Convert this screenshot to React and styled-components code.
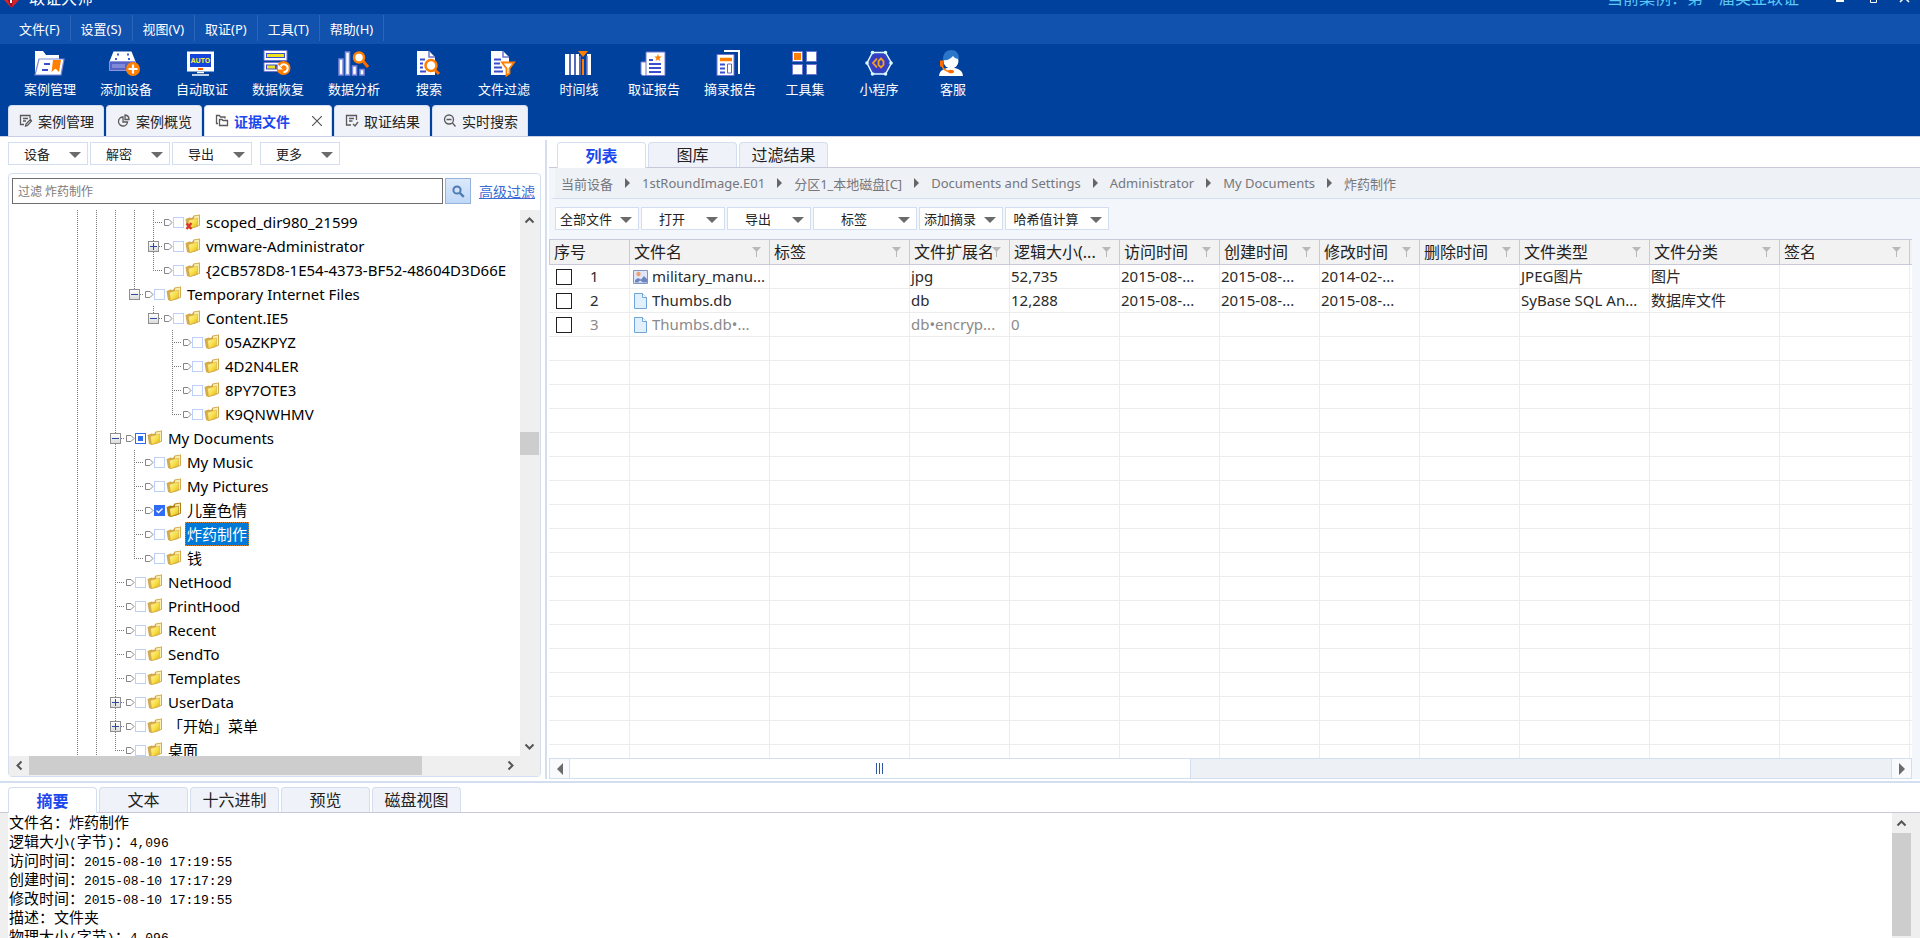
// src/App.jsx
import React, { useState } from 'react';
import styled, { createGlobalStyle, css } from 'styled-components';

const MENUS = ['文件(F)', '设置(S)', '视图(V)', '取证(P)', '工具(T)', '帮助(H)'];

const LEFT_ACTIONS = ['设备', '解密', '导出'];

const LIST_ACTIONS = [
  { label: '全部文件' },
  { label: '打开' },
  { label: '导出' },
  { label: '标签', wide: true },
  { label: '添加摘录' },
  { label: '哈希值计算', wide: true },
];

const CRUMBS = [
  '当前设备',
  '1stRoundImage.E01',
  '分区1_本地磁盘[C]',
  'Documents and Settings',
  'Administrator',
  'My Documents',
  '炸药制作',
];

// guides: ancestor levels that still have a line running down
const TREE = [
  { name: 'scoped_dir980_21599', level: 4, guides: [0, 1, 2, 3], deleted: true },
  { name: 'vmware-Administrator', level: 4, guides: [0, 1, 2, 3], box: 'plus' },
  { name: '{2CB578D8-1E54-4373-BF52-48604D3D66E', level: 4, guides: [0, 1, 2, 3], last: true },
  { name: 'Temporary Internet Files', level: 3, guides: [0, 1, 2], box: 'minus', last: true },
  { name: 'Content.IE5', level: 4, guides: [0, 1, 2], box: 'minus', last: true },
  { name: '05AZKPYZ', level: 5, guides: [0, 1, 2] },
  { name: '4D2N4LER', level: 5, guides: [0, 1, 2] },
  { name: '8PY7OTE3', level: 5, guides: [0, 1, 2] },
  { name: 'K9QNWHMV', level: 5, guides: [0, 1, 2], last: true },
  { name: 'My Documents', level: 2, guides: [0, 1], box: 'minus', partial: true },
  { name: 'My Music', level: 3, guides: [0, 1, 2] },
  { name: 'My Pictures', level: 3, guides: [0, 1, 2] },
  { name: '儿童色情', level: 3, guides: [0, 1, 2], checked: true },
  { name: '炸药制作', level: 3, guides: [0, 1, 2] },
  { name: '钱', level: 3, guides: [0, 1, 2], last: true },
  { name: 'NetHood', level: 2, guides: [0, 1] },
  { name: 'PrintHood', level: 2, guides: [0, 1] },
  { name: 'Recent', level: 2, guides: [0, 1] },
  { name: 'SendTo', level: 2, guides: [0, 1] },
  { name: 'Templates', level: 2, guides: [0, 1] },
  { name: 'UserData', level: 2, guides: [0, 1], box: 'plus' },
  { name: '「开始」菜单', level: 2, guides: [0, 1], box: 'plus' },
  { name: '桌面', level: 2, guides: [0, 1], last: true },
];

const COLUMNS = [
  { title: '序号', width: 81, plain: true },
  { title: '文件名', width: 140 },
  { title: '标签', width: 140 },
  { title: '文件扩展名', width: 100 },
  { title: '逻辑大小(...', width: 110 },
  { title: '访问时间', width: 100 },
  { title: '创建时间', width: 100 },
  { title: '修改时间', width: 100 },
  { title: '删除时间', width: 100 },
  { title: '文件类型', width: 130 },
  { title: '文件分类', width: 130 },
  { title: '签名', width: 130 },
  { title: '', width: 130, plain: true },
];

const FILES = [
  {
    icon: 'image',
    name: 'military_manu...',
    cells: ['', 'jpg', '52,735', '2015-08-...', '2015-08-...', '2014-02-...', '', 'JPEG图片', '图片', '', ''],
  },
  {
    icon: 'file',
    name: 'Thumbs.db',
    cells: ['', 'db', '12,288', '2015-08-...', '2015-08-...', '2015-08-...', '', 'SyBase SQL An...', '数据库文件', '', ''],
  },
  {
    icon: 'file',
    name: 'Thumbs.db•...',
    dim: true,
    cells: ['', 'db•encryp...', '0', '', '', '', '', '', '', '', ''],
  },
];

const EMPTY_ROWS = 18;

const SUMMARY = [
  '文件名：炸药制作',
  '逻辑大小(字节)：4,096',
  '访问时间：2015-08-10 17:19:55',
  '创建时间：2015-08-10 17:17:29',
  '修改时间：2015-08-10 17:19:55',
  '描述：文件夹',
  '物理大小(字节)：4,096',
];

/* ---------- icons ---------- */

const toolIcons = {
  cases: (
    <>
      <path d="M0 25V1h8l3 4h13v4" fill="#fff" />
      <path d="M4 9h25l-3 16H0z" fill="#fff" stroke="#7d86d6" strokeWidth="1.200" />
      <path d="M9 14h6M7 20h6" stroke="#3a4fd0" strokeWidth="2" />
      <path d="M18 10h8l-2 12-3.500-3.500-4 3.500z" fill="#ff7f00" />
    </>
  ),
  device: (
    <g transform="translate(-2 0)">
      <path d="M4.500 1.500h18l4 10h-26z" fill="#fff" />
      <path d="M.5 11.500h26v9h-26z" fill="#5563c4" stroke="#8b95e0" />
      <path d="M3 16h13" stroke="#8089d8" strokeWidth="4" />
      <path d="M8 4.500h2M18 4.500h2M6 9h2M19 9h2" stroke="#3a5fd0" strokeWidth="2" />
      <circle cx="24" cy="19" r="7" fill="#ff7f00" />
      <path d="M24 14.500v9M19.500 19h9" stroke="#fff" strokeWidth="2.200" />
    </g>
  ),
  auto: (
    <>
      <path d="M0 1.500h27v20H0z" fill="#fff" />
      <path d="M3 4h21v13H3z" fill="#1545dc" />
      <text x="13.500" y="12.500" textAnchor="middle" fontSize="7" fontWeight="700" fill="#f4ee3c">AUTO</text>
      <path d="M11 19h5" stroke="#ff5a00" strokeWidth="2" />
      <path d="M10 22.500h7M5 25h17" stroke="#fff" strokeWidth="1.500" />
    </>
  ),
  recover: (
    <>
      <path d="M1 .5h23v10H1zM1 12.500h22v9H1z" fill="#fff" stroke="#6f76d0" />
      <path d="M3 5.500h19M3 17h11" stroke="#3a4fd0" strokeWidth="5" />
      <path d="M4 5.500h17M4 17h8" stroke="#f0e31c" strokeWidth="3" />
      <circle cx="20.500" cy="18" r="7" fill="#ff7f00" />
      <path d="M17.500 16.500a3.800 3.800 0 1 1 3 5.500" fill="none" stroke="#fff" strokeWidth="2" />
      <path d="M15 14.500v5h5z" fill="#fff" />
    </>
  ),
  analyse: (
    <>
      <path d="M0 9h4v16H0zM6.500 2h4v23h-4zM13.500 16h4v9h-4zM21 19.500h4v5.500h-4z" fill="#fff" stroke="#8088dc" strokeWidth="1.500" />
      <path d="M24 11l5 6" stroke="#ff6a00" strokeWidth="3" />
      <circle cx="20" cy="7.500" r="5" fill="#fff" stroke="#ff7f00" strokeWidth="2.500" />
    </>
  ),
  search: (
    <>
      <path d="M3 1h12l6 6v18H3z" fill="#fff" />
      <path d="M15 1v6h6" fill="none" stroke="#6f76d0" strokeWidth="1.500" />
      <path d="M6 9.500h5M6 13.500h3M6 17.500h3M6 21.500h6" stroke="#3a4fd0" strokeWidth="2" />
      <path d="M21 20l4 4" stroke="#ff6a00" strokeWidth="3" />
      <circle cx="17" cy="15.500" r="5.500" fill="#fff" stroke="#ff7f00" strokeWidth="2.500" />
    </>
  ),
  filter: (
    <>
      <path d="M2 1h12l6 6v18H2z" fill="#fff" />
      <path d="M14 1v6h6" fill="none" stroke="#6f76d0" strokeWidth="1.500" />
      <path d="M5 9.500h7M5 13.500h6M5 17.500h8M5 21.500h9" stroke="#3a4fd0" strokeWidth="2" />
      <path d="M13 12.500h12l-4.500 6v5l-3 2v-7z" fill="#fff" stroke="#ff7f00" strokeWidth="1.800" />
    </>
  ),
  timeline: (
    <>
      <path d="M1 4h4v21H1zM7 4h3v21H7zM12 4h3v21h-3zM23 4h4v21h-4z" fill="#fff" />
      <path d="M6 4v21M11 4v21M16 6v19M23 6v19" stroke="#7078c8" strokeWidth="1.500" />
      <path d="M14 1h10l-5 6z" fill="#ff7f00" />
      <path d="M19 9v16" stroke="#ff7f00" strokeWidth="2" />
    </>
  ),
  report: (
    <>
      <path d="M2 12h6v13.500H4q-2 0-2-2z" fill="#fff" stroke="#7b82cf" />
      <path d="M7 2h19v23.500H7z" fill="#fff" stroke="#6f76d0" />
      <path d="M10 10h4M10 14h12M10 18h12M10 22h12" stroke="#3a4fd0" strokeWidth="2" />
      <path d="M19 4l1 2.500h2.600l-2 1.800.8 2.700-2.400-1.500-2.400 1.500.8-2.700-2-1.800H18z" fill="#ff7f00" />
    </>
  ),
  excerpt: (
    <>
      <path d="M9 1h15v23" fill="none" stroke="#fff" strokeWidth="2" />
      <path d="M2 4.500h17v21H2z" fill="#fff" stroke="#6f76d0" />
      <path d="M5 9.500h12" stroke="#ff7f00" strokeWidth="3.500" />
      <path d="M5 14.500h5M5 18.500h5M5 22.500h5" stroke="#3a4fd0" strokeWidth="2" />
      <path d="M12.500 14h4v9h-4z" fill="#fff" stroke="#5f68d0" />
    </>
  ),
  tools: (
    <>
      <path d="M2.500 1.500h10v10h-10zM16.500 1.500h10v10h-10zM2.500 14.500h10v10h-10zM16.500 14.500h10v10h-10z" fill="#fff" stroke="#6f76d0" />
      <path d="M4 3h7v7H4z" fill="#ff7f00" />
    </>
  ),
  mini: (
    <>
      <path d="M8.500 2.500h13l6 10.500-6 11h-13L3 13z" fill="#2a4cc0" stroke="#e6f6ff" strokeWidth="1.500" />
      <circle cx="15" cy="13" r="9" fill="#3a3cc4" />
      <g fill="#d8fbff">
        <circle cx="8.500" cy="2.500" r="1.800" /><circle cx="21.500" cy="2.500" r="1.800" />
        <circle cx="8.500" cy="24" r="1.800" /><circle cx="21.500" cy="24" r="1.800" />
        <circle cx="3" cy="13" r="1.800" /><circle cx="27" cy="13" r="1.800" />
      </g>
      <path d="M13 8.500L9 13l4 4.500M17 8.500L14.500 11v4l2.500 2.500 2.500-2.500v-4z" fill="none" stroke="#f2a51e" strokeWidth="1.800" />
    </>
  ),
  service: (
    <>
      <path d="M1 26q0-6 8-8h8q8 2 8 8z" fill="#fff" />
      <circle cx="13" cy="11" r="7.500" fill="#fff" />
      <path d="M5 10Q5 0 13 0t8 9q-4 0-6-3-4 5-10 4z" fill="#2c76c9" />
      <path d="M2 10.500h3.500v6H2z" fill="#ff6a00" />
      <path d="M4 16q2 5 8 5.500" fill="none" stroke="#ff7f00" strokeWidth="1.500" />
      <ellipse cx="13" cy="21.500" rx="3" ry="1.800" fill="#ff6a00" />
    </>
  ),
};

const TOOLS = [
  { label: '案例管理', icon: 'cases' },
  { label: '添加设备', icon: 'device' },
  { label: '自动取证', icon: 'auto' },
  { label: '数据恢复', icon: 'recover' },
  { label: '数据分析', icon: 'analyse' },
  { label: '搜索', icon: 'search' },
  { label: '文件过滤', icon: 'filter' },
  { label: '时间线', icon: 'timeline' },
  { label: '取证报告', icon: 'report' },
  { label: '摘录报告', icon: 'excerpt' },
  { label: '工具集', icon: 'tools' },
  { label: '小程序', icon: 'mini' },
  { label: '客服', icon: 'service' },
];

const tabIcons = {
  cases: <path d="M11 4.500V1.500H1.500v9H5M4 4.500h5M4 7h3M11.500 5.500l-4.500 4.500-.5 2 2-.5 4-4.500z" />,
  overview: (
    <>
      <path d="M6 3a4.500 4.500 0 1 0 4.500 5H6z" />
      <path d="M8 1a4.500 4.500 0 0 1 4 4.500H8z" />
    </>
  ),
  evidence: <path d="M3 9.500H1.500v-8h3l1 1.500h4.500v1.500M4.500 11.500v-6h2.500l1 1h4.500v5z" />,
  result: <path d="M11.500 6V1.500H1.500v9.500H6M4 4.500h5M4 7h3.500M8 10l2 2 3-4" />,
  search: (
    <>
      <circle cx="6" cy="5.500" r="4.500" />
      <path d="M3.500 5.500h5M9.500 9l3 3.500" />
    </>
  ),
};

const WORK_TABS = [
  { label: '案例管理', icon: 'cases' },
  { label: '案例概览', icon: 'overview' },
  { label: '证据文件', icon: 'evidence', closable: true },
  { label: '取证结果', icon: 'result' },
  { label: '实时搜索', icon: 'search' },
];

const FolderIcon = ({ deleted, dark }) => (
  <svg width="16" height="16" viewBox="0 0 16 16" aria-hidden="true">
    <defs>
      <linearGradient id="folderFront" x1="0" y1="0" x2="1" y2="1">
        <stop offset="0" stopColor="#fff7ae" />
        <stop offset="0.600" stopColor="#f6dc3f" />
        <stop offset="1" stopColor="#dca92a" />
      </linearGradient>
    </defs>
    <path d="M.5 5l4-1.500 2.500.5 1.500-2.500 6.500-1v11l-4.500 2-6 1.500-2.500-1z" fill={dark ? '#b07f12' : '#d2aa4c'} />
    <path d="M9 2.500l5-1v9.500l-4 1.500z" fill="#fbf0b4" />
    <path d="M3.500 6.500L12.500 4v8L4.500 14.500z" fill="url(#folderFront)" stroke={dark ? '#a87a10' : '#d6ae45'} strokeWidth="0.600" />
    {deleted && <path d="M1.500 9.500l5 5.500M6.500 9l-5 6" stroke="#d8392b" strokeWidth="2.400" />}
  </svg>
);

const TagIcon = () => (
  <svg width="10" height="11" viewBox="0 0 10 11" aria-hidden="true">
    <path d="M1.500 2.500H6l3 3-3 3H1.500z" fill="#fff" stroke="#858585" />
  </svg>
);

const ImageFileIcon = () => (
  <svg width="15" height="16" viewBox="0 0 15 16" aria-hidden="true">
    <path d="M.5 1.500h14v13H.5z" fill="#dfe6f7" stroke="#8296c4" />
    <circle cx="5.500" cy="5" r="2.200" fill="#f0a070" />
    <path d="M2 13.500V11l3-2 3 1.500L11 7l3 3v3.500z" fill="#6d86c0" />
    <path d="M5 13.500l2-2 3 2z" fill="#e8eefa" />
  </svg>
);

const PlainFileIcon = () => (
  <svg width="15" height="16" viewBox="0 0 15 16" aria-hidden="true">
    <path d="M1.500 .5h8l4 4v11h-12z" fill="#e2f0fd" stroke="#6fa5d8" />
    <path d="M9.500 .5v4h4" fill="#fff" stroke="#6fa5d8" />
  </svg>
);

const FunnelIcon = () => (
  <svg width="9" height="10" viewBox="0 0 9 10" aria-hidden="true">
    <path d="M0 0h9L5 4.500V10H4V4.500z" fill="#b9b9b9" />
  </svg>
);

const CHEVRONS = {
  up: 'M1.500 7.500l4-4 4 4',
  down: 'M1.500 3.500l4 4 4-4',
  left: 'M7.500 1.500l-4 4 4 4',
  right: 'M3.500 1.500l4 4-4 4',
};

/* ---------- parts ---------- */

const Chevron = ({ to }) => (
  <svg width="11" height="11" viewBox="0 0 11 11" aria-hidden="true">
    <path d={CHEVRONS[to]} fill="none" stroke="#555" strokeWidth="2" />
  </svg>
);

const Dropdown = ({ label, width, spaced }) => (
  <DropButton type="button" $width={width} $spaced={spaced}>
    <DropLabel>{label}</DropLabel>
    <DropCaret>
      <svg width="12" height="6" viewBox="0 0 12 6" aria-hidden="true">
        <path d="M0 0h12L6 6z" fill="#6b6b6b" />
      </svg>
    </DropCaret>
  </DropButton>
);

const ScrollBar = ({ vertical, before, size, after, hideEnd }) => (
  <Bar $vertical={vertical}>
    <BarButton type="button" aria-label={vertical ? '向上' : '向左'}>
      <Chevron to={vertical ? 'up' : 'left'} />
    </BarButton>
    <BarPart $grow={before} />
    <BarPart $grow={size} $thumb />
    <BarPart $grow={after} />
    {!hideEnd && (
      <BarButton type="button" aria-label={vertical ? '向下' : '向右'}>
        <Chevron to={vertical ? 'down' : 'right'} />
      </BarButton>
    )}
  </Bar>
);

const TreeRow = ({ node, index, selected, onSelect }) => {
  const [checked, setChecked] = useState(!!node.checked);
  const id = `node-${index}`;
  const cells = [];
  for (let i = 0; i < node.level; i += 1) {
    cells.push(<Guide key={i} $line={node.guides.includes(i)} />);
  }

  return (
    <Row>
      {cells}
      <Elbow $last={node.last}>
        {node.box && (
          <Expander type="button" aria-label={node.box === 'plus' ? '展开' : '收起'}>
            <svg width="9" height="9" viewBox="0 0 9 9" aria-hidden="true">
              <path d={node.box === 'plus' ? 'M1 4.500h7M4.500 1v7' : 'M1 4.500h7'} stroke="#2b4a9b" />
            </svg>
          </Expander>
        )}
      </Elbow>
      <TagIcon />
      <TreeCheck
        type="checkbox"
        id={id}
        checked={checked}
        $partial={node.partial}
        onChange={() => setChecked(!checked)}
      />
      <FolderIcon deleted={node.deleted} dark={node.checked} />
      <NodeLabel htmlFor={id} $selected={selected} onClick={onSelect}>
        {node.name}
      </NodeLabel>
    </Row>
  );
};

// latin runs are set smaller so two of them fill one hanzi cell
const MonoLine = ({ text }) => (
  <SummaryLine>
    {text.split(/([\x20-\x7e]+)/).map((part, i) => (i % 2 ? <Latin key={i}>{part}</Latin> : part))}
  </SummaryLine>
);

const App = () => {
  const [workTab, setWorkTab] = useState('证据文件');
  const [viewTab, setViewTab] = useState('列表');
  const [detailTab, setDetailTab] = useState('摘要');
  const [selected, setSelected] = useState('炸药制作');

  return (
    <Window>
      <GlobalStyle />
      <TitleBar>
        <svg width="16" height="8" viewBox="0 0 16 8" aria-hidden="true">
          <path d="M0 0h15L7.500 8z" fill="#d8232a" />
          <path d="M4 0l3.500 8L9 0z" fill="#8e1018" />
          <path d="M6 0h2v3H6z" fill="#fff" />
        </svg>
        <AppName>取证大师</AppName>
        <CaseName>当前案例：第一届美亚取证</CaseName>
        <svg width="76" height="4" viewBox="0 0 76 4" aria-hidden="true">
          <path d="M0 0h8v2H0z" fill="#fff" />
          <path d="M34.500 0v2.500h6V0" fill="none" stroke="#fff" />
          <path d="M64 2l3-3M73 2l-3-3" stroke="#fff" strokeWidth="1.500" />
        </svg>
      </TitleBar>

      <MenuBar>
        {MENUS.map((m) => (
          <MenuItem type="button" key={m}>{m}</MenuItem>
        ))}
      </MenuBar>

      <ToolBar>
        {TOOLS.map((t) => (
          <Tool type="button" key={t.label} $narrow={t.label.length < 4}>
            <svg width="30" height="28" viewBox="0 0 30 28" overflow="visible" aria-hidden="true">{toolIcons[t.icon]}</svg>
            <span>{t.label}</span>
          </Tool>
        ))}
      </ToolBar>

      <WorkTabs>
        {WORK_TABS.map((t) => (
          <WorkTab
            type="button"
            key={t.label}
            $active={workTab === t.label}
            $closable={t.closable}
            onClick={() => setWorkTab(t.label)}
          >
            <svg width="14" height="14" viewBox="0 0 14 14" fill="none" stroke="#5a5a5a" strokeWidth="1.300" aria-hidden="true">
              {tabIcons[t.icon]}
            </svg>
            <WorkTabText>{t.label}</WorkTabText>
            {t.closable && (
              <svg width="10" height="10" viewBox="0 0 10 10" aria-hidden="true">
                <path d="M0 0l10 10M10 0L0 10" stroke="#555" strokeWidth="1.200" />
              </svg>
            )}
          </WorkTab>
        ))}
      </WorkTabs>

      <Main>
        <Side>
          <SideActions>
            {LEFT_ACTIONS.map((a) => (
              <Dropdown key={a} label={a} width={80} />
            ))}
            <Dropdown label="更多" width={80} spaced />
          </SideActions>
          <TreePanel>
            <SearchRow>
              <SearchInput type="text" aria-label="过滤" placeholder="过滤 炸药制作" />
              <SearchButton type="button" aria-label="搜索">
                <svg width="13" height="13" viewBox="0 0 13 13" aria-hidden="true">
                  <circle cx="5" cy="5" r="3.600" fill="none" stroke="#4f7bb5" strokeWidth="2" />
                  <path d="M7.800 7.800l4 4" stroke="#4f7bb5" strokeWidth="2.400" />
                </svg>
              </SearchButton>
              <AdvancedLink href="#advanced">高级过滤</AdvancedLink>
            </SearchRow>
            <TreeArea>
              <Tree>
                {TREE.map((node, i) => (
                  <TreeRow
                    key={node.name}
                    node={node}
                    index={i}
                    selected={selected === node.name}
                    onSelect={() => setSelected(node.name)}
                  />
                ))}
              </Tree>
              <ScrollBar vertical before={202} size={23} after={281} />
              <ScrollBar before={0} size={393} after={78} />
              <Corner />
            </TreeArea>
          </TreePanel>
        </Side>

        <Splitter />

        <Content>
          <ViewTabs>
            {['列表', '图库', '过滤结果'].map((t) => (
              <Tab type="button" key={t} $active={viewTab === t} onClick={() => setViewTab(t)}>{t}</Tab>
            ))}
          </ViewTabs>
          <Crumbs aria-label="路径">
            {CRUMBS.map((c, i) => (
              <React.Fragment key={c}>
                {i > 0 && (
                  <svg width="5" height="10" viewBox="0 0 5 10" aria-hidden="true">
                    <path d="M0 0l5 5-5 5z" fill="#666" />
                  </svg>
                )}
                <Crumb href={`#crumb-${i}`}>{c}</Crumb>
              </React.Fragment>
            ))}
          </Crumbs>
          <ListActions>
            {LIST_ACTIONS.map((a) => (
              <Dropdown key={a.label} label={a.label} width={a.wide ? 104 : 84} />
            ))}
          </ListActions>
          <TableArea>
            <TableClip>
              <FileTable>
                <colgroup>
                  {COLUMNS.map((c, i) => <col key={i} style={{ width: c.width }} />)}
                </colgroup>
                <thead>
                  <tr>
                    {COLUMNS.map((c, i) => (
                      <HeadCell key={i}>
                        <HeadInner>
                          <span>{c.title}</span>
                          {!c.plain && <FunnelIcon />}
                        </HeadInner>
                      </HeadCell>
                    ))}
                  </tr>
                </thead>
                <tbody>
                  {FILES.map((f, i) => (
                    <FileRow key={f.name} $dim={f.dim}>
                      <td>
                        <IndexCell>
                          <FileCheck type="checkbox" aria-label={`选择 ${f.name}`} />
                          <span>{i + 1}</span>
                        </IndexCell>
                      </td>
                      <td>
                        <NameCell>
                          {f.icon === 'image' ? <ImageFileIcon /> : <PlainFileIcon />}
                          <span>{f.name}</span>
                        </NameCell>
                      </td>
                      {f.cells.map((c, j) => <td key={j}>{c}</td>)}
                    </FileRow>
                  ))}
                  {Array.from({ length: EMPTY_ROWS }, (_, i) => (
                    <FileRow key={i}>
                      {COLUMNS.map((c, j) => <td key={j} />)}
                    </FileRow>
                  ))}
                </tbody>
              </FileTable>
            </TableClip>
            <TableScroll>
              <TableScrollButton type="button" aria-label="向左">
                <svg width="6" height="12" viewBox="0 0 6 12" aria-hidden="true">
                  <path d="M6 0v12L0 6z" fill="#6b6b6b" />
                </svg>
              </TableScrollButton>
              <TableThumb>
                <svg width="8" height="11" viewBox="0 0 8 11" aria-hidden="true">
                  <path d="M.5 0v11M3.500 0v11M6.500 0v11" stroke="#2f55a5" />
                </svg>
              </TableThumb>
              <TableTrack />
              <TableScrollButton type="button" aria-label="向右">
                <svg width="6" height="12" viewBox="0 0 6 12" aria-hidden="true">
                  <path d="M0 0v12l6-6z" fill="#6b6b6b" />
                </svg>
              </TableScrollButton>
            </TableScroll>
          </TableArea>
        </Content>
      </Main>

      <Details>
        <DetailTabs>
          {['摘要', '文本', '十六进制', '预览', '磁盘视图'].map((t) => (
            <Tab type="button" key={t} $active={detailTab === t} onClick={() => setDetailTab(t)}>{t}</Tab>
          ))}
        </DetailTabs>
        <DetailBody>
          <Summary>
            {SUMMARY.map((s) => <MonoLine key={s} text={s} />)}
          </Summary>
          <ScrollBar vertical before={0} size={102} after={2} hideEnd />
        </DetailBody>
      </Details>
    </Window>
  );
};

/* ---------- styles ---------- */

const dots = '#7a7a7a 0 1px, transparent 1px 2px';

const GlobalStyle = createGlobalStyle`
  * {
    box-sizing: border-box;
  }
  body {
    margin: 0;
    background-color: #fff;
    font-family: 'Noto Sans', 'Noto Sans CJK SC', sans-serif;
    font-size: 13px;
    color: #222;
  }
  button, input {
    margin: 0;
    padding: 0;
    border: 0;
    font: inherit;
    color: inherit;
    background: none;
  }
  svg {
    display: block;
    flex: none;
  }
`;

const Window = styled.div`
  display: flex;
  flex-direction: column;
  height: 100vh;
  overflow: hidden;
  white-space: nowrap;
`;

const TitleBar = styled.header`
  display: flex;
  align-items: flex-start;
  flex: none;
  height: 14px;
  padding: 0 8px 0 4px;
  overflow: hidden;
  background-color: #00419e;
  color: #fff;
  font-size: 16px;
  line-height: 20px;
`;

const AppName = styled.span`
  margin: -12px 0 0 9px;
`;

const CaseName = styled.span`
  margin: -12px 37px 0 auto;
  color: #5cc8f5;
`;

const MenuBar = styled.nav`
  display: flex;
  flex: none;
  height: 30px;
  padding: 1px 0 3px 9px;
  background-color: #1152ae;
  color: #fff;
`;

const MenuItem = styled.button`
  padding: 0 10px;
  border-right: 1px solid #2c66ba;
`;

const ToolBar = styled.div`
  display: flex;
  flex: none;
  height: 61px;
  padding: 6px 12px 0;
  background-color: #00419e;
`;

const Tool = styled.button`
  display: flex;
  flex-direction: column;
  align-items: center;
  width: ${({ $narrow }) => ($narrow ? 74 : 76)}px;
  gap: 1px;
  color: #fff;
  line-height: 20px;
`;

const WorkTabs = styled.div`
  display: flex;
  flex: none;
  gap: 2px;
  height: 32px;
  padding-left: 8px;
  border-bottom: 1px solid #c9cfe4;
  background-color: #00419e;
`;

const WorkTab = styled.button`
  display: flex;
  align-items: center;
  width: ${({ $closable }) => ($closable ? 128 : 96)}px;
  padding: 0 9px 0 10px;
  border: 1px solid #d3def0;
  border-bottom: 0;
  border-radius: 4px 4px 0 0;
  background-color: ${({ $active }) => ($active ? '#fff' : '#eff2f8')};
  color: ${({ $active }) => ($active ? '#1a48ee' : '#222')};
  font-size: 14px;
  font-weight: ${({ $active }) => ($active ? 700 : 400)};
`;

const WorkTabText = styled.span`
  flex: 1;
  margin-left: 5px;
  text-align: left;
`;

const Main = styled.main`
  display: flex;
  flex: 1;
  min-height: 0;
`;

const Side = styled.section`
  display: flex;
  flex-direction: column;
  flex: none;
  width: 545px;
  padding: 5px 4px 4px 8px;
`;

const SideActions = styled.div`
  display: flex;
  gap: 2px;
  margin-bottom: 8px;
`;

const DropButton = styled.button`
  display: flex;
  align-items: center;
  width: ${({ $width }) => $width}px;
  height: 23px;
  margin-left: ${({ $spaced }) => ($spaced ? 6 : 0)}px;
  border: 1px solid #d3def0;
  background-color: #fff;
`;

const DropLabel = styled.span`
  flex: 1;
  text-align: center;
`;

const DropCaret = styled.span`
  width: 22px;
  padding: 2px 0 0 4px;
`;

const TreePanel = styled.div`
  display: flex;
  flex-direction: column;
  flex: 1;
  min-height: 0;
  border: 1px solid #d3def0;
  border-radius: 4px;
`;

const SearchRow = styled.div`
  display: flex;
  align-items: center;
  flex: none;
  padding: 4px 5px 6px 3px;
`;

const SearchInput = styled.input`
  flex: 1;
  min-width: 0;
  height: 26px;
  padding: 0 5px;
  border: 1px solid #6e6e6e;
  background-color: #fff;
  font-size: 12px;
  &::placeholder {
    color: #7c7c7c;
    opacity: 1;
  }
`;

const SearchButton = styled.button`
  display: flex;
  align-items: center;
  justify-content: center;
  width: 26px;
  height: 26px;
  margin: 0 8px 0 2px;
  border: 1px solid #93b3dc;
  background: linear-gradient(#dbe9fb, #c0d8f8);
`;

const AdvancedLink = styled.a`
  color: #3a6ad4;
  font-size: 14px;
`;

const TreeArea = styled.div`
  display: grid;
  grid-template-columns: minmax(0, 1fr) 20px;
  grid-template-rows: minmax(0, 1fr) 20px;
  flex: 1;
  min-height: 0;
`;

const Tree = styled.div`
  padding-left: 59px;
  overflow: hidden;
  color: #000;
  font-size: 15px;
`;

const Row = styled.div`
  display: flex;
  align-items: center;
  height: 24px;
`;

const Guide = styled.span`
  flex: none;
  align-self: stretch;
  width: 19px;
  ${({ $line }) =>
    $line &&
    css`
      background: repeating-linear-gradient(to bottom, ${dots}) 9px 0 / 1px 100% no-repeat;
    `}
`;

const Elbow = styled.span`
  display: flex;
  align-items: center;
  justify-content: center;
  flex: none;
  align-self: stretch;
  width: 19px;
  background:
    repeating-linear-gradient(to bottom, ${dots}) 9px 0 / 1px ${({ $last }) => ($last ? '50%' : '100%')} no-repeat,
    repeating-linear-gradient(to right, ${dots}) 9px 12px / 10px 1px no-repeat;
`;

const Expander = styled.button`
  width: 11px;
  height: 11px;
  border: 1px solid #8f8f8f;
  background: linear-gradient(#fff, #dcdcdc);
`;

const TreeCheck = styled.input`
  appearance: none;
  flex: none;
  width: 11px;
  height: 11px;
  margin-right: 1px;
  border: 1px solid ${({ $partial }) => ($partial ? '#2f6bf5' : '#bcd0fa')};
  background: ${({ $partial }) =>
    $partial ? 'linear-gradient(#2f6bf5, #2f6bf5) center / 5px 5px no-repeat #fff' : '#fff'};
  &:checked {
    border-color: #2f6bf5;
    background-color: #2f6bf5;
    background-image: url("data:image/svg+xml,%3Csvg xmlns='http://www.w3.org/2000/svg' viewBox='0 0 9 9'%3E%3Cpath d='M1.500 4.500l2 2 4-4' fill='none' stroke='white' stroke-width='1.300'/%3E%3C/svg%3E");
  }
`;

const NodeLabel = styled.label`
  height: 24px;
  margin-left: 3px;
  padding: 0 1px;
  border: 1px dotted ${({ $selected }) => ($selected ? '#d9822b' : 'transparent')};
  background-color: ${({ $selected }) => ($selected ? '#0078d7' : 'transparent')};
  color: ${({ $selected }) => ($selected ? '#fff' : '#000')};
  line-height: 22px;
`;

const Corner = styled.div`
  background-color: #efefef;
`;

const Bar = styled.div`
  display: flex;
  flex-direction: ${({ $vertical }) => ($vertical ? 'column' : 'row')};
  background-color: #efefef;
  ${({ $vertical }) => ($vertical ? 'padding-right: 1px;' : 'padding-bottom: 1px;')}
`;

const BarButton = styled.button`
  display: flex;
  align-items: center;
  justify-content: center;
  flex: 0 0 20px;
`;

const BarPart = styled.div`
  flex: ${({ $grow }) => $grow} 1 0;
  background-color: ${({ $thumb }) => ($thumb ? '#cdcdcd' : 'transparent')};
`;

const Splitter = styled.div`
  flex: none;
  width: 2px;
  margin: 3px 2px 2px 0;
  background-color: #d3def0;
`;

const Content = styled.section`
  display: flex;
  flex-direction: column;
  flex: 1;
  min-width: 0;
  padding-bottom: 2px;
`;

const tabRow = css`
  display: flex;
  flex: none;
  gap: 2px;
  height: 31px;
  padding: 5px 8px 0;
  border-bottom: 1px solid #c9c9dc;
`;

const ViewTabs = styled.div`
  ${tabRow}
`;

const Tab = styled.button`
  width: 89px;
  height: ${({ $active }) => ($active ? 26 : 25)}px;
  border: 1px solid #d3def0;
  border-bottom: 0;
  border-radius: 4px 4px 0 0;
  background-color: ${({ $active }) => ($active ? '#fff' : '#eff2f8')};
  color: ${({ $active }) => ($active ? '#1a48ee' : '#222')};
  font-size: 16px;
  font-weight: ${({ $active }) => ($active ? 700 : 400)};
  line-height: 24px;
`;

const Crumbs = styled.nav`
  display: flex;
  align-items: center;
  flex: none;
  gap: 12px;
  height: 31px;
  padding-left: 6px;
  border-left: 6px solid #f3f6fb;
  border-bottom: 1px solid #d3def0;
  background-color: #eef1f6;
`;

const Crumb = styled.a`
  color: #75777c;
  text-decoration: none;
`;

const ListActions = styled.div`
  display: flex;
  flex: none;
  gap: 2px;
  padding: 8px 6px 9px;
  background-color: #f3f6fb;
`;

const TableArea = styled.div`
  display: flex;
  flex-direction: column;
  flex: 1;
  min-height: 0;
  border-right: 8px solid #f3f6fb;
`;

const TableClip = styled.div`
  flex: 1;
  min-height: 0;
  overflow: hidden;
`;

const FileTable = styled.table`
  table-layout: fixed;
  width: 1491px;
  border-spacing: 0;
  font-size: 15px;
`;

const HeadCell = styled.th`
  height: 26px;
  padding: 0 8px 0 4px;
  border: solid #c9c9dc;
  border-width: 1px 1px 1px 0;
  background-color: #f2f2f2;
  font-size: 16px;
  font-weight: 400;
  line-height: 24px;
  &:first-child {
    border-left-width: 1px;
  }
`;

const HeadInner = styled.div`
  display: flex;
  align-items: center;
  justify-content: space-between;
  svg {
    margin-left: -2px;
  }
`;

const FileRow = styled.tr`
  color: ${({ $dim }) => ($dim ? '#8a8a8a' : '#2b2b2b')};
  td {
    height: 24px;
    padding: 0 0 0 1px;
    border: solid #ececec;
    border-width: 0 1px 1px 0;
    line-height: 23px;
  }
`;

const IndexCell = styled.div`
  display: flex;
  align-items: center;
  gap: 18px;
  padding-left: 6px;
`;

const FileCheck = styled.input`
  appearance: none;
  width: 16px;
  height: 16px;
  border: 1px solid #222;
  background-color: #fff;
  &:checked {
    background-color: #2f6bf5;
  }
`;

const NameCell = styled.div`
  display: flex;
  align-items: center;
  gap: 4px;
  padding-left: 2px;
`;

const TableScroll = styled.div`
  display: flex;
  flex: none;
  height: 21px;
  border: solid #d3def0;
  border-width: 1px 0;
  background-color: #edf1f6;
`;

const TableScrollButton = styled.button`
  display: flex;
  align-items: center;
  justify-content: center;
  flex: 0 0 21px;
  border: solid #d3def0;
  border-width: 0 1px;
  background-color: #f8fafd;
`;

const TableThumb = styled.div`
  display: flex;
  align-items: center;
  justify-content: center;
  flex: 620 1 0;
  border-right: 1px solid #d3def0;
  background-color: #fff;
`;

const TableTrack = styled.div`
  flex: 701 1 0;
`;

const Details = styled.section`
  display: flex;
  flex-direction: column;
  flex: 0 0 157px;
  min-height: 0;
  border-top: 2px solid #d3def0;
`;

const DetailTabs = styled.div`
  ${tabRow}
  height: 30px;
  padding-top: 4px;
`;

const DetailBody = styled.div`
  display: grid;
  grid-template-columns: minmax(0, 1fr) 20px;
  grid-template-rows: minmax(0, 1fr);
  flex: 1;
  min-height: 0;
  border: solid #efefef;
  border-width: 0 8px;
`;

const Summary = styled.div`
  padding-left: 1px;
  overflow: hidden;
  color: #000;
  font-family: 'Noto Sans CJK SC', sans-serif;
  font-size: 15px;
`;

const SummaryLine = styled.div`
  height: 19px;
  line-height: 17px;
`;

const Latin = styled.span`
  font-family: 'Liberation Mono', monospace;
  font-size: 13px;
`;

export default App;
